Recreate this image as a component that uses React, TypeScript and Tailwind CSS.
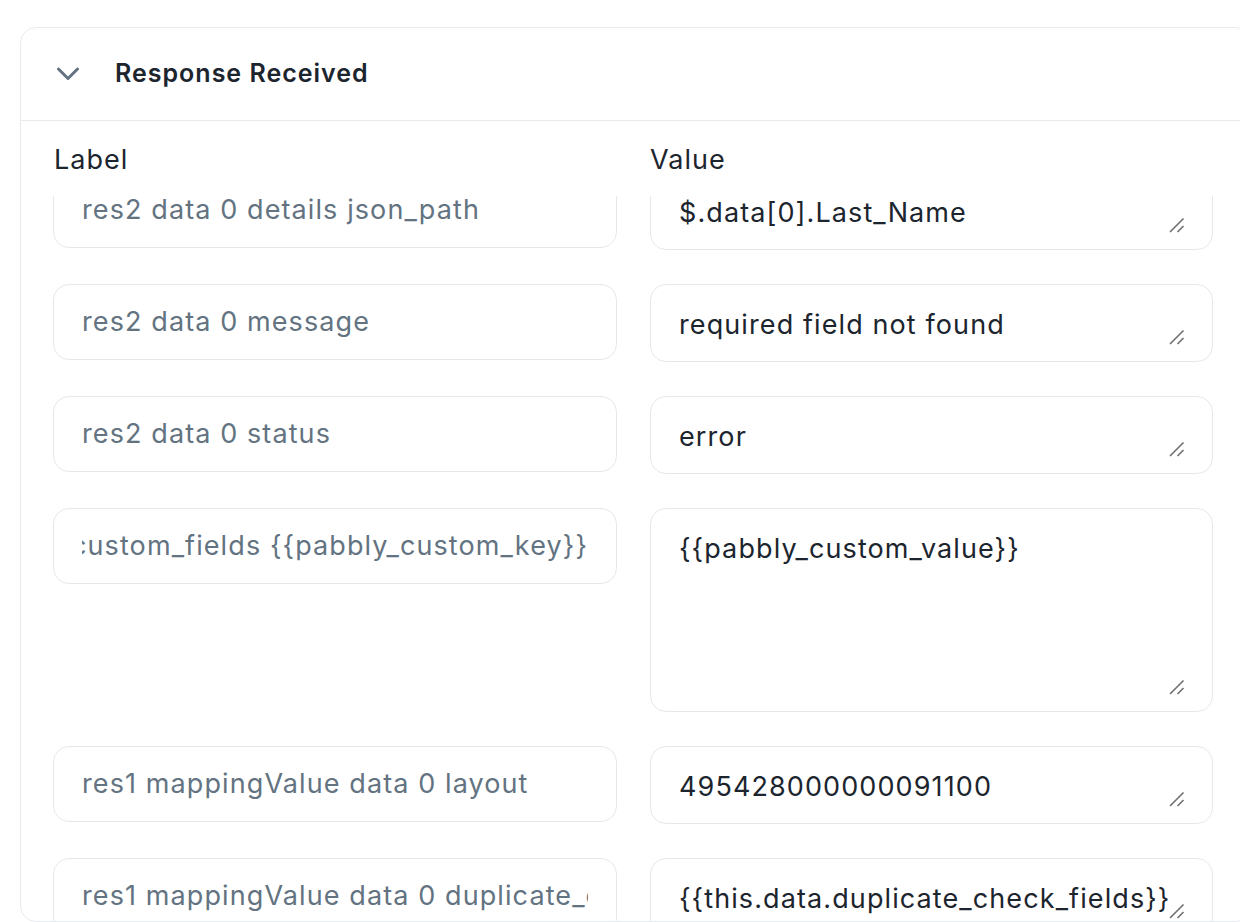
import React from "react";

type Row = { label: string; value: string; tall?: boolean; labelEnd?: boolean };

const rows: Row[] = [
  { label: "res2 data 0 details json_path", value: "$.data[0].Last_Name" },
  { label: "res2 data 0 message", value: "required field not found" },
  { label: "res2 data 0 status", value: "error" },
  {
    label: "res1 mappingValue data 0 custom_fields {{pabbly_custom_key}}",
    value: "{{pabbly_custom_value}}",
    tall: true,
    labelEnd: true,
  },
  { label: "res1 mappingValue data 0 layout", value: "495428000000091100" },
  {
    label: "res1 mappingValue data 0 duplicate_check_fields",
    value: "{{this.data.duplicate_check_fields}}",
  },
];

function Grip() {
  return (
    <svg
      className="absolute right-[27px] bottom-[16px]"
      width="16"
      height="16"
      viewBox="0 0 16 16"
      fill="none"
    >
      <line x1="1" y1="15" x2="14.5" y2="1.5" stroke="#6e6e6e" strokeWidth="1.6" />
      <line x1="8.5" y1="15" x2="14.5" y2="9" stroke="#6e6e6e" strokeWidth="1.6" />
    </svg>
  );
}

export default function App() {
  return (
    <div
      className="h-[922px] w-[1240px] overflow-hidden bg-white pl-[20px] pt-[27px]"
      style={{ fontFamily: "Inter, Roboto, 'Liberation Sans', sans-serif" }}
    >
      <div className="flex h-[895px] w-[1232px] flex-col overflow-hidden rounded-[16px] border border-[#e8ebee] bg-white">
        <div className="flex h-[93px] shrink-0 items-center border-b border-[#e8ebee] pl-[36px]">
          <svg width="22" height="14" viewBox="0 0 22 14" fill="none" className="mr-[36px]">
            <polyline
              points="1.5,2 11,11.5 20.5,2"
              stroke="#637381"
              strokeWidth="3"
              strokeLinecap="round"
              strokeLinejoin="round"
            />
          </svg>
          <span className="text-[25px] font-semibold tracking-[1px] text-[#1c252e]">Response Received</span>
        </div>
        <div className="grid h-[75px] shrink-0 grid-cols-[564px_563px] items-center gap-x-[33px] pl-[32px] pt-[4px] text-[27px] tracking-[1px] text-[#1c252e]">
          <div className="pl-[1px]">Label</div>
          <div>Value</div>
        </div>
        <div className="flex-1 overflow-hidden pl-[32px]">
          <div className="-mt-[24px] flex flex-col gap-[34px]">
            {rows.map((r, i) => (
              <div key={i} className="grid grid-cols-[564px_563px] items-start gap-x-[33px]">
                <div className="flex h-[76px] items-center rounded-[16px] border border-[#e5e8eb] px-[28px]">
                  <div
                    className={
                      "flex min-w-0 flex-1 overflow-hidden whitespace-nowrap text-[27px] tracking-[1.1px] text-[#637381] " +
                      (r.labelEnd ? "justify-end" : "justify-start")
                    }
                  >
                    <span className="shrink-0">{r.label}</span>
                  </div>
                </div>
                <div
                  className={
                    "relative rounded-[16px] border border-[#e5e8eb] px-[28px] pt-[20px] text-[27px] leading-[40px] tracking-[1.1px] text-[#1c252e] " +
                    (r.tall ? "h-[204px]" : "h-[78px]")
                  }
                >
                  <div className="whitespace-nowrap">{r.value}</div>
                  <Grip />
                </div>
              </div>
            ))}
          </div>
        </div>
      </div>
    </div>
  );
}
